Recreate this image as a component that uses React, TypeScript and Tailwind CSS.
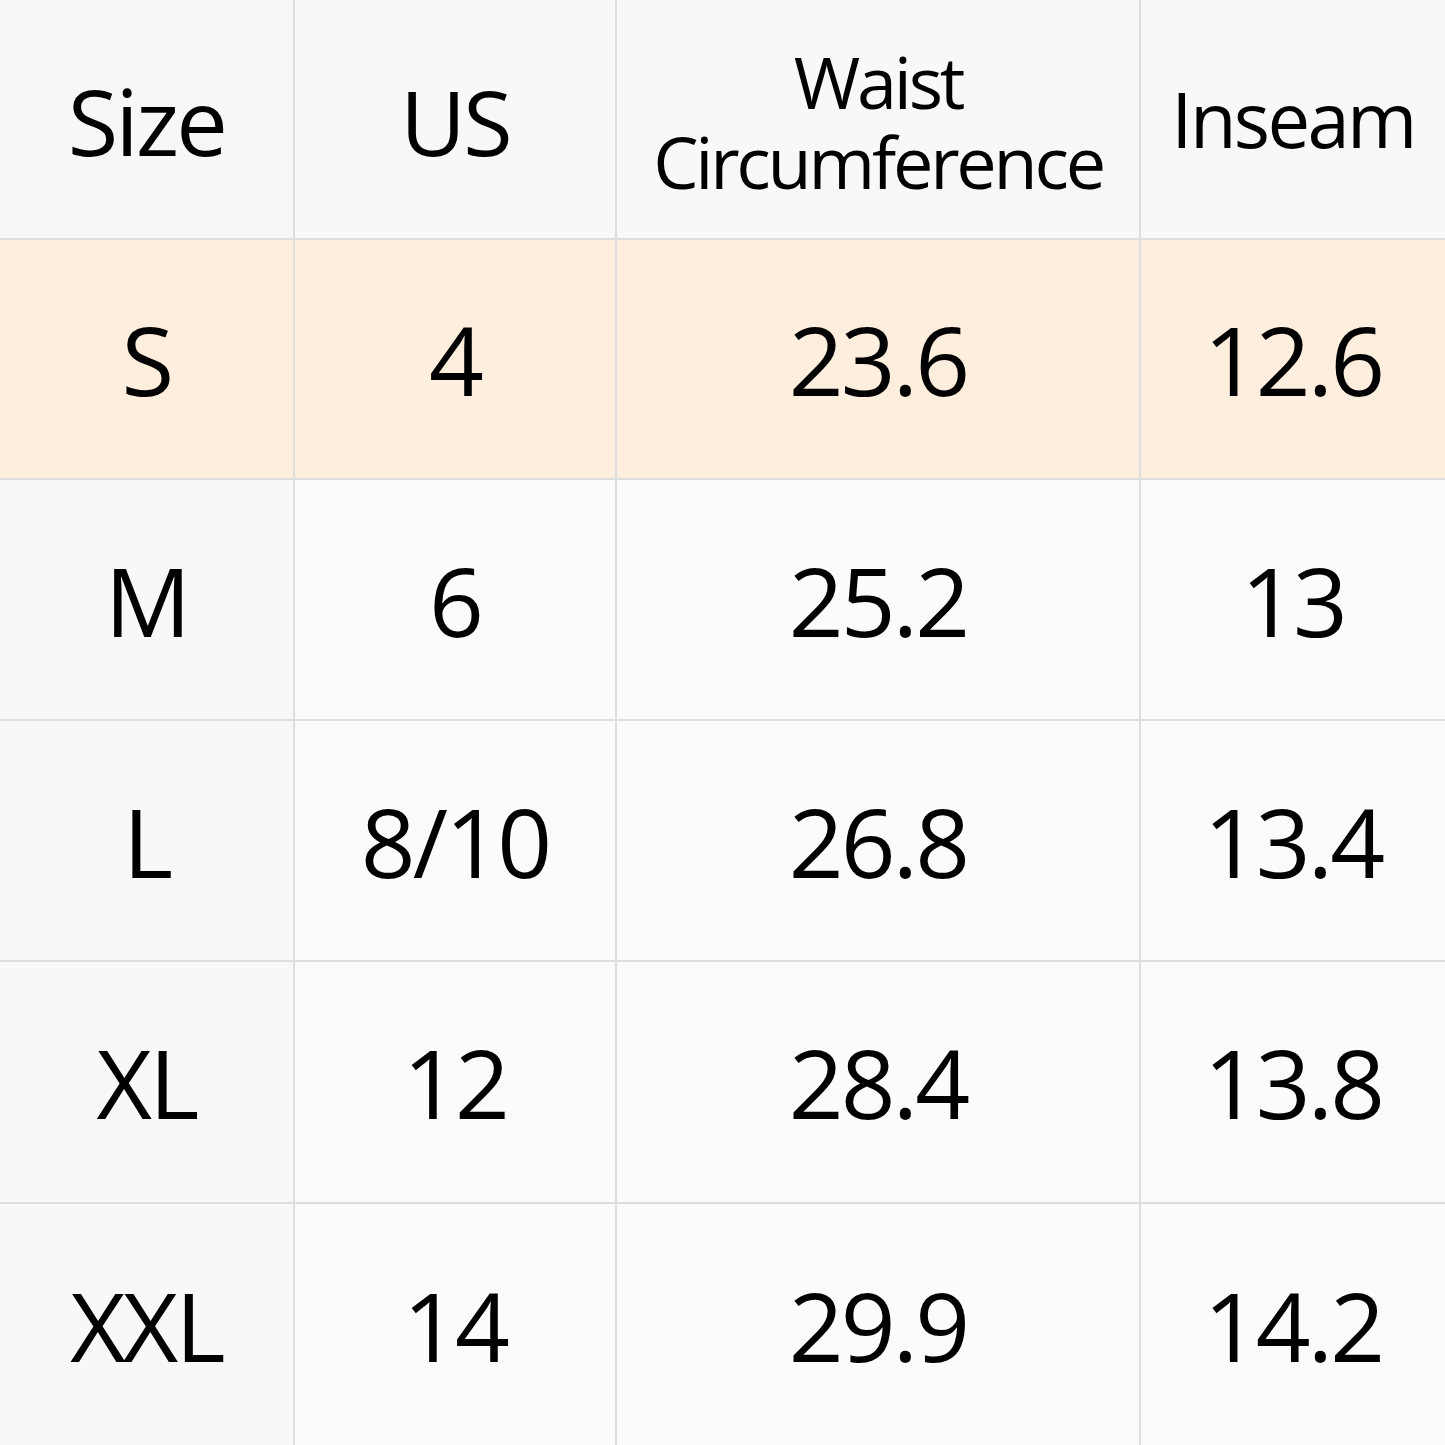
import React from 'react';

const rows = [
  { size: 'S', us: '4', waist: '23.6', inseam: '12.6', hl: true },
  { size: 'M', us: '6', waist: '25.2', inseam: '13' },
  { size: 'L', us: '8/10', waist: '26.8', inseam: '13.4' },
  { size: 'XL', us: '12', waist: '28.4', inseam: '13.8' },
  { size: 'XXL', us: '14', waist: '29.9', inseam: '14.2' },
];

const cell = 'flex items-center justify-center border-[#dedede] text-black';

export default function App() {
  return (
    <div
      className="w-[1445px] h-[1445px] bg-[#fafafa] overflow-hidden"
      style={{ fontFamily: '"Open Sans", "Noto Sans", sans-serif' }}
    >
      <div className="grid grid-cols-[295px_322px_524px_304px] grid-rows-[240px_240px_241px_241px_242px_241px]">
        {/* header */}
        <div className={`${cell} border-r-2 border-b-2 bg-[#f7f7f7] text-[92px] tracking-[-0.03em] pt-1`}>Size</div>
        <div className={`${cell} border-r-2 border-b-2 bg-[#f8f8f8] text-[90px] tracking-[-0.03em] pt-1`}>US</div>
        <div className={`${cell} border-r-2 border-b-2 bg-[#f8f8f8] flex-col text-[72px] tracking-[-0.045em] pt-1`}>
          <div className="h-[80px] leading-[80px] overflow-visible">Waist</div>
          <div className="h-[80px] leading-[80px] overflow-visible">Circumference</div>
        </div>
        <div className={`${cell} border-b-2 bg-[#f8f8f8] text-[76px] tracking-[-0.035em]`}>Inseam</div>

        {rows.map((r, i) => {
          const bg = r.hl ? 'bg-[#fdeede]' : 'bg-[#fbfbfb]';
          const bb = i < rows.length - 1 ? 'border-b-2' : '';
          return (
            <React.Fragment key={r.size}>
              <div className={`${cell} ${bb} border-r-2 text-[96px] tracking-[-0.03em] ${r.hl ? 'bg-[#fdeede]' : 'bg-[#f8f8f8]'}`}>{r.size}</div>
              <div className={`${cell} ${bg} ${bb} border-r-2 text-[96px] tracking-[-0.03em]`}>{r.us}</div>
              <div className={`${cell} ${bg} ${bb} border-r-2 text-[96px] tracking-[-0.03em]`}>{r.waist}</div>
              <div className={`${cell} ${bg} ${bb} text-[96px] tracking-[-0.03em]`}>{r.inseam}</div>
            </React.Fragment>
          );
        })}
      </div>
    </div>
  );
}
